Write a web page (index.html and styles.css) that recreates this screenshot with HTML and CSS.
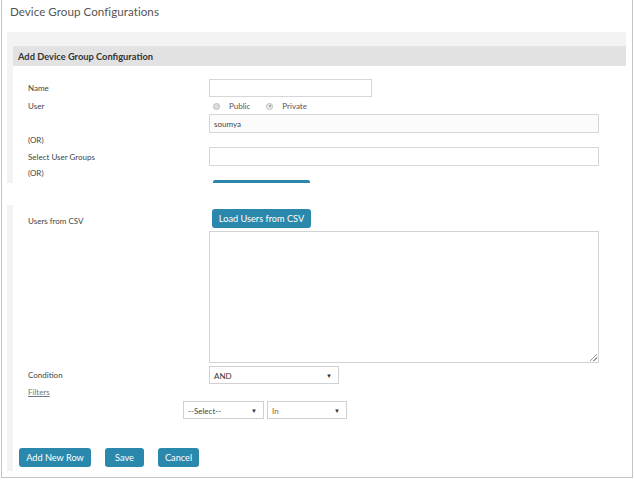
FILE: index.html
```html
<!DOCTYPE html>
<html>
<head>
<meta charset="utf-8">
<link rel="stylesheet" href="styles.css">
</head>
<body>
<div class="frame">
  <div class="title">Device Group Configurations</div>
  <div class="panel panel-top">
    <div class="panel-inner">
      <div class="panel-head">Add Device Group Configuration</div>
      <div class="row row-name">
        <div class="label">Name</div>
        <div class="field"><div class="input input-short"></div></div>
      </div>
      <div class="row row-user">
        <div class="label">User</div>
        <div class="field radios">
          <span class="radio"></span><span class="rlabel">Public</span>
          <span class="radio checked"></span><span class="rlabel">Private</span>
        </div>
      </div>
      <div class="row row-soumya">
        <div class="label"></div>
        <div class="field"><div class="input input-long filled">soumya</div></div>
      </div>
      <div class="row row-or">
        <div class="label">(OR)</div>
      </div>
      <div class="row row-groups">
        <div class="label">Select User Groups</div>
        <div class="field"><div class="input input-long"></div></div>
      </div>
      <div class="row row-or2">
        <div class="label">(OR)</div>
      </div>
      <div class="row row-peek">
        <div class="label"></div>
        <div class="field"><div class="peek"></div></div>
      </div>
    </div>
  </div>
  <div class="panel panel-bottom">
    <div class="panel-inner">
      <div class="row row-csv">
        <div class="label">Users from CSV</div>
        <div class="field"><button class="btn btn-load">Load Users from CSV</button></div>
      </div>
      <div class="row row-text">
        <div class="label"></div>
        <div class="field"><div class="textarea"><span class="grip"></span></div></div>
      </div>
      <div class="row row-cond">
        <div class="label">Condition</div>
        <div class="field"><div class="select sel-and">AND<span class="caret">▼</span></div></div>
      </div>
      <div class="row row-filters">
        <div class="label"><span class="link">Filters</span></div>
      </div>
      <div class="filter-selects">
        <div class="select sel-a">--Select--<span class="caret">▼</span></div>
        <div class="select sel-b">In<span class="caret">▼</span></div>
      </div>
      <div class="actions">
        <button class="btn btn-add">Add New Row</button>
        <button class="btn btn-save">Save</button>
        <button class="btn btn-cancel">Cancel</button>
      </div>
    </div>
  </div>
</div>
</body>
</html>
```
FILE: styles.css
```css
* { box-sizing: border-box; }
body {
  margin: 0;
  background: #fff;
  font-family: "Lato", "Open Sans", sans-serif;
  color: #555;
}
.frame {
  margin-left: 1px;
  width: 632px;
  height: 478px;
  border-left: 1px solid #c4c4c4;
  border-right: 1px solid #c4c4c4;
  border-bottom: 1px solid #c4c4c4;
  background: #fff;
}
.title {
  height: 32px;
  padding: 5px 0 0 8px;
  font-size: 11.6px;
  color: #555;
  letter-spacing: 0.05px;
}
.panel {
  margin: 0 6px 0 5px;
  padding-left: 6px;
  background: #f3f3f3;
}
.panel-top {
  padding-top: 14px;
  height: 151px;
  overflow: hidden;
}
.panel-bottom {
  margin-top: 22px;
  height: 266px;
}
.panel-inner {
  background: #fff;
  height: 100%;
}
.panel-head {
  height: 20px;
  background: #e2e2e2;
  font-size: 9.3px;
  font-weight: bold;
  color: #333;
  padding: 5px 0 0 5px;
}
.row {
  display: flex;
  align-items: center;
}
.label {
  width: 196px;
  flex: none;
  padding-left: 15px;
  font-size: 8px;
  color: #444;
}
.field { flex: none; }
.input {
  height: 18px;
  border: 1px solid #d6d6d6;
  background: #fff;
  font-size: 8px;
  color: #444;
  padding: 4px 0 0 4px;
}
.input-short { width: 163px; }
.input-long { width: 390px; height: 19px; }
.input.filled { background: #fbfbfb; }
.row-name { margin-top: 13px; height: 18px; }
.row-user { height: 12px; margin-top: 3px; }
.row-soumya { margin-top: 2px; height: 19px; }
.row-or { height: 14px; }
.row-groups { height: 19px; }
.row-or2 { height: 14px; }
.row-peek { height: 4px; align-items: flex-start; }
.peek {
  margin-left: 4px;
  width: 97px;
  height: 3px;
  background: #2a86aa;
  border-radius: 2px 2px 0 0;
}
.radios {
  display: flex;
  align-items: center;
  font-size: 8px;
  color: #555;
}
.radio {
  width: 7px;
  height: 7px;
  border-radius: 50%;
  border: 1px solid #bbb;
  background: #ddd;
  margin-left: 4px;
  margin-right: 9px;
  display: inline-block;
  position: relative;
}
.radio.checked { background: #eee; }
.radio.checked::after {
  content: "";
  position: absolute;
  left: 1.5px;
  top: 1.5px;
  width: 2px;
  height: 2px;
  border-radius: 50%;
  background: #888;
}
.rlabel { margin-right: 16px; }
.rlabel + .radio { margin-left: 0; margin-right: 9px; }
.btn {
  font-family: inherit;
  border: none;
  border-radius: 3px;
  background: #2a88ac;
  color: #fff;
  font-size: 9.2px;
  height: 19px;
  padding: 0;
  cursor: pointer;
}
.row-csv { padding-top: 4px; height: 23px; align-items: flex-end; }
.row-csv .label { align-self: center; padding-top: 4px; }
.btn-load { width: 99px; margin-left: 3px; }
.row-text { margin-top: 3px; }
.textarea {
  width: 390px;
  height: 132px;
  border: 1px solid #d3d3d3;
  position: relative;
}
.grip {
  position: absolute;
  right: 1px;
  bottom: 1px;
  width: 7px;
  height: 7px;
  background: linear-gradient(135deg, transparent 45%, #999 45%, #999 55%, transparent 55%, transparent 70%, #999 70%, #999 80%, transparent 80%);
}
.row-cond { margin-top: 3px; height: 18px; }
.select {
  position: relative;
  height: 18px;
  border: 1px solid #d0d0d0;
  background: #fff;
  font-size: 8px;
  color: #333;
  padding: 4px 0 0 4px;
}
.caret {
  position: absolute;
  right: 6px;
  top: 5px;
  font-size: 6px;
  color: #333;
}
.sel-and { width: 130px; }
.row-filters { height: 14px; margin-top: 1px; }
.link {
  text-decoration: underline;
  color: #6a7a86;
}
.filter-selects {
  display: flex;
  gap: 3px;
  margin-left: 170px;
  margin-top: 2px;
}
.sel-a { width: 81px; color: #444; }
.sel-b { width: 80px; color: #8a6a40; }
.actions {
  display: flex;
  gap: 14px;
  margin: 29px 0 0 6px;
}
.btn-add { width: 72px; }
.btn-save { width: 39px; }
.btn-cancel { width: 41px; }
```
